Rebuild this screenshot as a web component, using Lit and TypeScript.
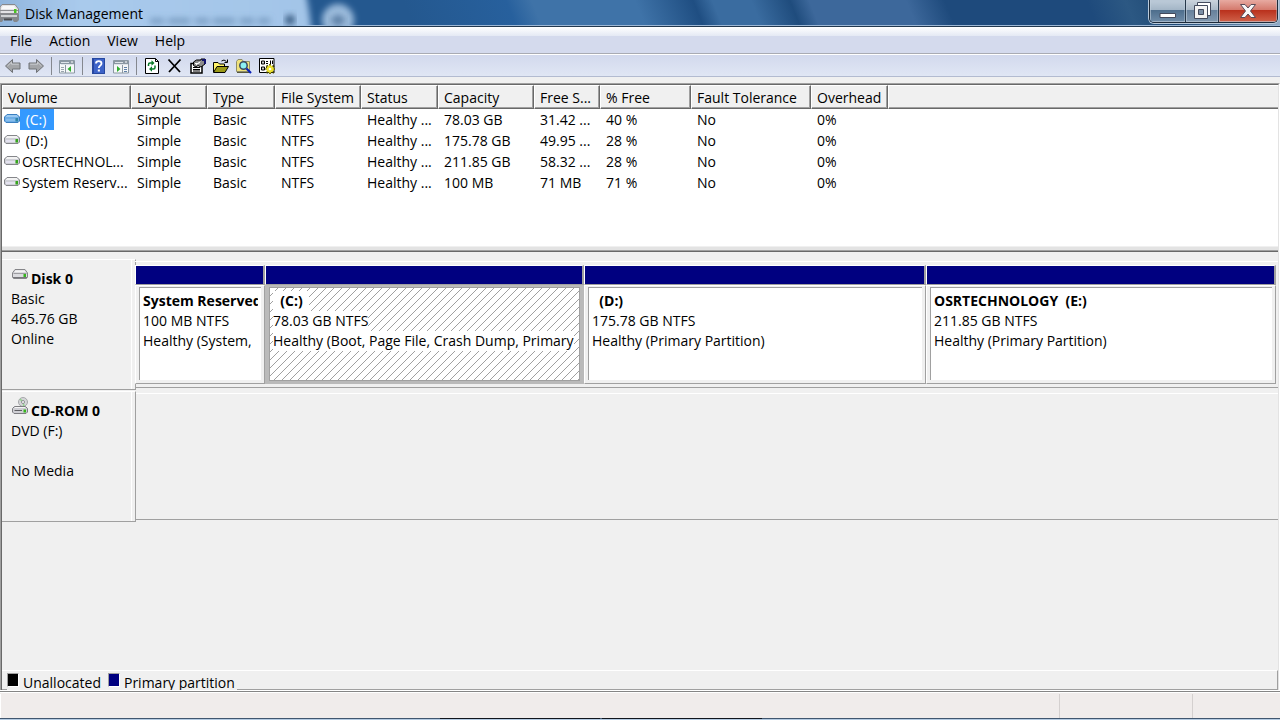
import { LitElement, html, css, svg, nothing } from "lit";
import { customElement, property } from "lit/decorators.js";
import { classMap } from "lit/directives/class-map.js";

interface Volume {
  name: string;
  cells: string[];
  selected?: boolean;
}

interface Partition {
  name: string;
  size: string;
  status: string;
  share: number;
  selected?: boolean;
}

const COLUMNS: [string, number][] = [
  ["Volume", 129],
  ["Layout", 76],
  ["Type", 68],
  ["File System", 86],
  ["Status", 77],
  ["Capacity", 96],
  ["Free S...", 66],
  ["% Free", 91],
  ["Fault Tolerance", 120],
  ["Overhead", 77],
];

const VOLUMES: Volume[] = [
  { name: " (C:)", selected: true, cells: ["Simple", "Basic", "NTFS", "Healthy ...", "78.03 GB", "31.42 ...", "40 %", "No", "0%"] },
  { name: " (D:)", cells: ["Simple", "Basic", "NTFS", "Healthy ...", "175.78 GB", "49.95 ...", "28 %", "No", "0%"] },
  { name: "OSRTECHNOL...", cells: ["Simple", "Basic", "NTFS", "Healthy ...", "211.85 GB", "58.32 ...", "28 %", "No", "0%"] },
  { name: "System Reserv...", cells: ["Simple", "Basic", "NTFS", "Healthy ...", "100 MB", "71 MB", "71 %", "No", "0%"] },
];

const PARTITIONS: Partition[] = [
  { name: "System Reserved", size: "100 MB NTFS", status: "Healthy (System,", share: 130 },
  { name: "  (C:)", size: "78.03 GB NTFS", status: "Healthy (Boot, Page File, Crash Dump, Primary", share: 319, selected: true },
  { name: "  (D:)", size: "175.78 GB NTFS", status: "Healthy (Primary Partition)", share: 342 },
  { name: "OSRTECHNOLOGY  (E:)", size: "211.85 GB NTFS", status: "Healthy (Primary Partition)", share: 350 },
];

const icon = (body: unknown) => html`<svg width="16" height="16" viewBox="0 0 16 16" aria-hidden="true">${body}</svg>`;

const arrow = svg`
  <path d="M.5 8 7.500 1.500V5H15V11H7.500V14.500Z" fill="#a3a5a8" stroke="#6f7276"/>
  <path d="M2.500 8 6.500 4.200V6.200H13.800" fill="none" stroke="#c9cbcf"/>`;

const ICONS = {
  back: icon(arrow),
  forward: icon(svg`<g transform="matrix(-1 0 0 1 16 0)">${arrow}</g>`),
  tree: icon(svg`
    <path d="M.5 2.500H15.500V15H.5Z" fill="#f5f7f8" stroke="#8b98a3"/>
    <path d="M1 3H15V6H1Z" fill="#8b98a3"/><path d="M2 4.500H10M2 6.500H15" stroke="#dde3e8"/><path d="M12 4H14" stroke="#fff"/>
    <path d="M6.500 7V15" stroke="#8b98a3"/><path d="M2 9.500H5M2 11.500H5M2 13.500H5" stroke="#9aa5ae"/>
    <path d="M12 8V14L8.500 11Z" fill="#2fae2f"/>`),
  help: icon(svg`
    <path d="M2 0H15V16H2Z" fill="#3d63c8"/><path d="M2 0H4V16H2Z" fill="#2846a0"/><path d="M2.500 .5H14.500V15.500H2.500Z" fill="none" stroke="#26489f"/>
    <path d="M6 5.500C6 2.300 11.500 2.300 11.500 5.500C11.500 7.500 8.800 7.800 8.800 10" fill="none" stroke="#fff" stroke-width="1.800"/><path d="M7.800 11.500H9.900V13.500H7.800Z" fill="#fff"/>`),
  panel: icon(svg`
    <path d="M.5 2.500H15.500V15H.5Z" fill="#f5f7f8" stroke="#8b98a3"/>
    <path d="M1 3H15V6H1Z" fill="#8b98a3"/><path d="M2 4.500H10M1 6.500H15" stroke="#dde3e8"/><path d="M12 4H14" stroke="#fff"/>
    <path d="M9.500 7V15" stroke="#8b98a3"/><path d="M11 9.500H14M11 11.500H14M11 13.500H14" stroke="#5f80a8"/>
    <path d="M4 8V14L7.500 11Z" fill="#2fae2f"/>`),
  refresh: icon(svg`
    <path d="M1.500 .5H11.500L14.500 3.500V15.500H1.500Z" fill="#fff" stroke="#000"/><path d="M11.500 .5V3.500H14.500" fill="none" stroke="#000"/>
    <path d="M4.500 8V6.500Q4.500 5 6 5H8.500M11 7.500V9.500Q11 11 9.500 11H7" fill="none" stroke="#0a7a2a" stroke-width="1.500"/>
    <path d="M7.500 2.300V7.700L10.500 5ZM8 8.300V13.700L5 11Z" fill="#0a7a2a"/>`),
  remove: icon(svg`<path d="M1.500 1.500 13 14M13.500 1.500 2 14" fill="none" stroke="#000" stroke-width="1.800"/>`),
  properties: icon(svg`
    <path d="M1 5.500H12V15H1Z" fill="#fff" stroke="#000" stroke-width="1.500"/><path d="M3 9.500H10M3 11.500H10M3 13H10" stroke="#000"/>
    <path d="M3.500 7.500V4L6.500 2H11V1H15V6L11 9L8 7.500 6 9Z" fill="#8a8a8a" stroke="#000"/>
    <path d="M5 5.500H8M6 7 9 4.500M10 3.500 8.500 6" stroke="#fff"/><path d="M12 1H16V6H14V3H12Z" fill="#12126b"/>`),
  open: icon(svg`
    <path d="M.5 14V4.500H5L6.500 6H11.500V8" fill="#fff36a" stroke="#000"/>
    <path d="M.5 14.500 4 8.500H15.500L12 14.500Z" fill="#9b9a18" stroke="#000"/>
    <path d="M8.500 3Q11 .8 13.500 3.500M14.500 1.500V4.500H11.500" fill="none" stroke="#000"/>`),
  find: icon(svg`
    <path d="M.5 13.500V3.500L2 1.500H6L7.500 3.500H13.500V13.500Z" fill="#f0e27c" stroke="#8e8d6a"/>
    <path d="M1 14.500H14" stroke="#55553c"/>
    <circle cx="7.500" cy="7.500" r="3.700" fill="#8cf0f4" stroke="#3b4a63" stroke-width="1.500"/><path d="M10.500 10.500 15 15" stroke="#0a20b8" stroke-width="2.200"/>`),
  settings: icon(svg`
    <path d="M.5 .5H15V14.500H.5Z" fill="#fff" stroke="#000"/>
    <path d="M2.500 3H5.500V6H2.500ZM2.500 9H5.500V12H2.500Z" fill="#c8c8c8" stroke="#000"/><path d="M7 3.500H9M7 5.500H9M7 9.500H9M11.500 2.500V6M13.500 2.500V6" stroke="#000"/>
    <path d="M11 6V16M6.500 11H16M7.500 7.500 15 15M15 7.500 7.500 15" stroke="#3c3900" stroke-width="2"/>
    <circle cx="11" cy="11" r="3.600" fill="#ede32e"/><path d="M11 6.500V9M7 11H9M11 13V15.500M13 11H15.500" stroke="#ede32e" stroke-width="1.200"/>
    <circle cx="11" cy="11" r="1.300" fill="#fff"/>`),
};

const driveIcon = (selected = false) => html`<svg width="16" height="9" viewBox="0 0 16 9" aria-hidden="true">
  <path d="M3 .5H13L15.500 3V7L14 8.500H2L.5 7V3Z" fill=${selected ? "#6faee6" : "#cfd0d6"} stroke=${selected ? "#3b7fc0" : "#85868a"}/>
  <path d="M3 1.500H13M2 2.500H14" stroke=${selected ? "#9bcaf2" : "#f3f3f3"}/>
  <path d="M2 6H11" stroke=${selected ? "#86bdec" : "#e4e2f0"} stroke-width="2"/>
  <path d="M11.500 4H14V7.500H11.500Z" fill=${selected ? "#2f86a8" : "#35a51c"}/>
</svg>`;

const diskIcon = html`<svg width="16" height="10" viewBox="0 0 16 10" aria-hidden="true">
  <path d="M3 .5H13L15.500 4V8L14.500 9.500H1.500L.5 8V4Z" fill="#dcdce0" stroke="#858589"/>
  <path d="M3.500 1.500H12.500L13.500 3H2.500Z" fill="#f4f4f4"/><path d="M1.500 4.500H14.500" stroke="#9d9da1"/>
  <path d="M1 8.500H15" stroke="#77777b"/><path d="M11.500 5H14V8H11.500Z" fill="#35b51c"/>
</svg>`;

const cdIcon = html`<svg width="16" height="17" viewBox="0 0 16 17" aria-hidden="true">
  <circle cx="11" cy="5" r="4.500" fill="#d5d6d8" stroke="#a6a7aa"/><path d="M8 2 11 5 12 9.500" stroke="#92d48e" stroke-width="1.500" fill="none"/>
  <circle cx="11" cy="5" r="1.500" fill="#fff" stroke="#8d8e92"/>
  <path d="M2.500 9.500H13.500L15.500 11.500V15L14 16.500H2L.5 15V11.500Z" fill="#cfcfd4" stroke="#7c7c80"/>
  <path d="M3 10.500H13" stroke="#f5f5f5"/><path d="M2.500 13.500H10" stroke="#5e5e62"/><path d="M11.500 12.500H14V15.500H11.500Z" fill="#35b51c"/>
</svg>`;

const shared = css`
  * { box-sizing: border-box; }
  svg { display: block; flex: none; }
`;

@customElement("dm-titlebar")
class TitleBar extends LitElement {
  static styles = [shared, css`
    :host {
      display: flex; align-items: center; height: 27px; position: relative; overflow: hidden;
      border-bottom: 1px solid #22384f;
      box-shadow: inset 0 -1px #9db8d6;
      background: linear-gradient(68deg, #24588f 0 32%, #27609d 40%, #3f73a8 42% 50%, #1f4e82 54.5%, #3a6ca0 56% 59%, #1f4c7d 62%, #3d689b 63.5% 71%, #1e4a7c 74% 85%, #2c5883 88%, #1f4a76 91%, #6888a8 97%, #9fb6cd 100%);
    }
    .glass { position: absolute; left: 0; top: 0; }
    .logo { position: relative; }
    h1 { position: relative; margin: 0 auto 0 6px; padding-top: 2px; font-size: 14px; font-weight: 400; line-height: 20px; }
    .controls {
      position: relative; display: flex; align-self: flex-start; height: 23px; margin-right: 2px;
      border: 1px solid #1d2b3a; border-top: 0; border-radius: 0 0 5px 5px; overflow: hidden;
      box-shadow: 0 0 0 1px #b9cadb;
    }
    button {
      display: grid; place-items: center; padding: 0; border: 0; border-right: 1px solid #26384a; width: 36px; height: 22px;
      background: linear-gradient(#b9c8d6 0 2px, #a3b5c6 45%, #4d6d8c 46%, #6f8ca8 100%);
      box-shadow: inset 1px -1px #c3d1de99, inset -1px 0 #c3d1de66;
    }
    .restore { width: 33px; background: linear-gradient(#cbd4dd 0, #a9b8c6 45%, #66809b 46%, #8299b0 100%); }
    .close { width: 58px; border: 0; background: linear-gradient(#e7aaa1 0, #d4796c 45%, #b9301c 46%, #d0624a 100%); }
  `];

  render() {
    return html`
      <svg class="glass" width="380" height="26" viewBox="0 0 380 26" aria-hidden="true">
        <defs>
          <filter id="soft" x="-20%" y="-60%" width="140%" height="220%"><feGaussianBlur stdDeviation="3"/></filter>
          <linearGradient id="tab"><stop offset="0" stop-color="#8bb0d9"/><stop offset=".3" stop-color="#a9caec"/><stop offset="1" stop-color="#a3c5e8"/></linearGradient>
        </defs>
        <path d="M-20-20H302Q310 5 312 40H-20Z" fill="url(#tab)" filter="url(#soft)"/>
        <g filter="url(#soft)"><path d="M120 0H280V36H120Z" fill="none"/><path d="M150 21H270" stroke="#5f83ac" stroke-width="5" stroke-dasharray="14 4 22 5" opacity=".7"/></g>
        <circle cx="290" cy="20" r="5" fill="#36587f" filter="url(#soft)"/>
        <circle cx="338" cy="20" r="16" fill="#9bbbdc" filter="url(#soft)"/>
        <path d="M331 20H345M338 15V26" stroke="#4f7299" stroke-width="4" filter="url(#soft)"/>
      </svg>
      <svg class="logo" width="19" height="20" viewBox="0 0 19 20" aria-hidden="true">
        <path d="M2 1.500H15L18.500 6V10.500H0V4Z" fill="#e3e3e5" stroke="#88898c"/><path d="M3 3H14L16 6H1Z" fill="#f8f8f8"/>
        <path d="M0 7.500H18" stroke="#8c8d90"/><path d="M14 6H16.500V10H14Z" fill="#49c422"/>
        <path d="M0 11H19V17L17 19H14L12 16H4L2 19H0Z" fill="#85888c"/><path d="M1 13H17" stroke="#d0d2d4" stroke-width="2"/><path d="M4 16.500H12" stroke="#4b4d50" stroke-width="2"/>
      </svg>
      <h1>Disk Management</h1>
      <div class="controls">
        <button aria-label="Minimize"><svg width="18" height="22" viewBox="0 0 18 22"><path d="M1 13.500H16.500V17.500H1Z" fill="#fff" stroke="#434a5c"/></svg></button>
        <button class="restore" aria-label="Restore"><svg width="20" height="20" viewBox="0 0 20 20">
          <path d="M5.500 1.500H18.500V14.500H5.500Z" fill="#fff" stroke="#434a5c"/>
          <path d="M2.500 4.500H15.500V17.500H2.500Z" fill="#f3f3f3" stroke="#434a5c"/><path d="M6.500 8.500H11.500V13.500H6.500Z" fill="#7b8ea5" stroke="#434a5c"/></svg></button>
        <button class="close" aria-label="Close"><svg width="18" height="16" viewBox="0 0 18 16">
          <path d="M1.500 1.500H6L9 5 12 1.500H16.500L11.500 8 16.500 14.500H12L9 11 6 14.500H1.500L6.500 8Z" fill="#f8f8f8" stroke="#584a57"/></svg></button>
      </div>`;
  }
}

@customElement("dm-toolbar")
class ToolBar extends LitElement {
  static styles = [shared, css`
    :host { display: block; }
    nav { display: flex; align-items: center; gap: 17px; height: 26px; padding: 2px 10px 0; background: linear-gradient(#fff, #e4e9f4 9px, #d4daed 9px); }
    nav button { padding: 0; border: 0; background: none; font: inherit; color: inherit; line-height: 20px; }
    .tools { display: flex; align-items: center; gap: 7px; height: 24px; padding: 2px 0 0 5px; border-top: 1px solid #a9abb3; border-bottom: 1px solid #b3bbd0; background: linear-gradient(#fff 0 1px, #d2d9ed 1px, #e0e6f4); }
    .tools button { padding: 0; border: 0; background: none; }
    .sep { width: 1px; height: 18px; background: #85888f; }
  `];

  render() {
    const tool = (label: string, glyph: unknown) => html`<button aria-label=${label}>${glyph}</button>`;
    const sep = html`<span class="sep"></span>`;
    return html`
      <nav>${["File", "Action", "View", "Help"].map((m) => html`<button>${m}</button>`)}</nav>
      <div class="tools">
        ${tool("Back", ICONS.back)}${tool("Forward", ICONS.forward)}${sep}
        ${tool("Console tree", ICONS.tree)}${sep}
        ${tool("Help", ICONS.help)}${tool("Action pane", ICONS.panel)}${sep}
        ${tool("Refresh", ICONS.refresh)}${tool("Delete", ICONS.remove)}${tool("Properties", ICONS.properties)}
        ${tool("Open", ICONS.open)}${tool("Explore", ICONS.find)}${tool("Settings", ICONS.settings)}
      </div>`;
  }
}

@customElement("dm-volume-list")
class VolumeList extends LitElement {
  static styles = [shared, css`
    :host { display: block; height: 160px; background: #fff; overflow: hidden; }
    table { width: 100%; border-collapse: separate; border-spacing: 0; table-layout: fixed; }
    th, td { padding: 0 0 0 6px; text-align: left; font-weight: 400; white-space: pre; overflow: hidden; line-height: 20px; }
    th {
      height: 24px; padding: 1px 0 0 5px; background: #f0f0f0;
      border: 1px solid #696969; border-top-color: #fff; border-left-color: #fff;
      box-shadow: inset -1px -1px #a0a0a0;
    }
    th:last-child { border-right: 0; box-shadow: inset 0 -1px #a0a0a0; }
    td { height: 21px; padding-top: 1px; }
    td:first-child { padding: 0 0 0 2px; }
    .name { display: flex; align-items: flex-start; height: 21px; }
    .name svg { margin-top: 5px; }
    .label { padding: 1px 2px 0; height: 21px; }
    .selected .label { background: #39f; color: #fff; padding-right: 8px; }
  `];

  render() {
    return html`<table>
      <colgroup>${COLUMNS.map(([, w]) => html`<col style="width:${w}px">`)}<col></colgroup>
      <thead><tr>${COLUMNS.map(([name]) => html`<th>${name}</th>`)}<th></th></tr></thead>
      <tbody>${VOLUMES.map((v) => html`<tr class=${classMap({ selected: !!v.selected })}>
        <td><div class="name">${driveIcon(v.selected)}<span class="label">${v.name}</span></div></td>
        ${v.cells.map((c) => html`<td>${c}</td>`)}<td></td>
      </tr>`)}</tbody>
    </table>`;
  }
}

@customElement("dm-partition")
class PartitionBox extends LitElement {
  @property({ attribute: false }) data!: Partition;

  static styles = [shared, css`
    :host { display: flex; flex-direction: column; min-width: 0; }
    .bar { height: 20px; background: #000080; border: 1px solid #fff; border-right: 2px solid #a0a0a0; border-bottom-color: #a0a0a0; }
    .body { flex: 1; display: flex; padding: 1px 3px 3px; border: 1px solid #fff; border-right-color: #a0a0a0; border-bottom-color: #a0a0a0; background: #f0f0f0; }
    .inner { position: relative; flex: 1; min-width: 0; padding: 3px; background: #fff; border: solid #a0a0a0; border-width: 1px 0 0 1px; }
    .selected { background: #bababa; border-color: #bababa; padding-bottom: 2px; }
    .selected .inner { border-width: 1px; padding-right: 0; }
    .hatch { position: absolute; inset: 0; width: 100%; height: 100%; }
    .line { position: relative; height: 20px; line-height: 20px; white-space: pre; overflow: hidden; }
    .line span { display: inline-block; height: 20px; background: #fff; }
    .title { font-weight: 700; }
    .selected .title span { padding-right: 6px; }
  `];

  render() {
    const { name, size, status, selected } = this.data;
    return html`
      <div class="bar"></div>
      <div class=${classMap({ body: true, selected: !!selected })}>
        <div class="inner">
          ${selected
            ? html`<svg class="hatch" aria-hidden="true"><defs><pattern id="h" width="8" height="8" patternUnits="userSpaceOnUse">
                ${[0, 1, 2, 3, 4, 5, 6, 7].map((i) => svg`<rect x=${i} y=${7 - i} width="1" height="1" fill="#a0a0a0"/>`)}
              </pattern></defs><rect width="100%" height="100%" fill="url(#h)"/></svg>`
            : nothing}
          <div class="line title"><span>${name}</span></div>
          <div class="line"><span>${size}</span></div>
          <div class="line"><span>${status}</span></div>
        </div>
      </div>`;
  }
}

@customElement("dm-disk-map")
class DiskMap extends LitElement {
  static styles = [shared, css`
    :host { display: flex; flex-direction: column; gap: 1px; padding-top: 7px; background: #f0f0f0; }
    .row { display: grid; grid-template-columns: 134px minmax(0, 1fr); min-height: 131px; }
    .disk {
      padding: 9px 0 0 9px; border: solid #a0a0a0; border-width: 1px 1px 1px 0; border-top-color: #fff;
      background: linear-gradient(#fff, #fff) 129px 0 / 1px 100% no-repeat; line-height: 20px;
    }
    .disk p { margin: 0; min-height: 20px; }
    .disk .head { display: flex; gap: 3px; padding-left: 1px; font-weight: 700; }
    .cdrom .head svg { margin-top: -4px; }
    .parts { display: flex; margin: 2px 0; padding: 3px 2px 3px 0; border-top: 1px solid #fff; border-bottom: 1px solid #a0a0a0; }
    .disk0 { margin-left: -1px; }
  `];

  render() {
    return html`
      <section class="row">
        <div class="disk"><p class="head">${diskIcon}Disk 0</p><p>Basic</p><p>465.76 GB</p><p>Online</p></div>
        <div class="parts disk0">${PARTITIONS.map((p) => html`<dm-partition .data=${p} style="flex:${p.share} 1 0"></dm-partition>`)}</div>
      </section>
      <section class="row cdrom">
        <div class="disk"><p class="head">${cdIcon}CD-ROM 0</p><p>DVD (F:)</p><p></p><p>No Media</p></div>
        <div class="parts"></div>
      </section>`;
  }
}

@customElement("app-root")
class AppRoot extends LitElement {
  static styles = [shared, css`
    :host {
      display: flex; flex-direction: column; min-height: 100vh; color: #000; background: #f0f0f0;
      font: 14px/20px "Open Sans", "Noto Sans", sans-serif;
    }
    .work {
      flex: 1; display: flex; flex-direction: column; margin-top: 6px;
      border: solid #a0a0a0; border-width: 1px 0 0 1px; border-right: 1px solid #fff;
    }
    .pane { flex: 1; display: flex; flex-direction: column; border: solid #696969; border-width: 1px 0 0 1px; border-right: 1px solid #e3e3e3; }
    .splitter { height: 7px; border-top: 1px solid #fff; border-bottom: 1px solid #696969; box-shadow: inset 0 -1px #a0a0a0; background: linear-gradient(#f0f0f0 0 1px, #e3e3e3 1px); }
    dm-disk-map { flex: 1; }
    .legend { display: flex; height: 20px; padding: 2px 0 0 5px; border: solid #a0a0a0; border-width: 1px 1px 1px 0; border-top-color: #fff; }
    .key { display: flex; gap: 4px; height: 18px; padding-right: 7px; background: #f0f0f0; }
    .key:last-child { padding-right: 2px; }
    .swatch { width: 12px; height: 14px; background: #000; border: 1px solid #a0a0a0; border-right-color: #fff; border-bottom-color: #fff; }
    .primary { background: #000080; }
    .status { display: grid; grid-template-columns: 1fr 133px 88px; height: 28px; border-top: 1px solid #fff; background: #f0eceb; box-shadow: inset 0 1px #858585, inset 0 2px #fff; }
    .status span { margin-top: 3px; border-left: 1px solid #d4d0cf; }
    .status span:first-child { border-left-color: #fff; }
    .edge { height: 2px; background: linear-gradient(#41566f 0 1px, #b4cbe2 1px); padding-left: 34.4%; display: flex; gap: 2px; }
    .edge i { width: 160px; height: 1px; background: #10151d; }
  `];

  render() {
    return html`
      <dm-titlebar></dm-titlebar>
      <dm-toolbar></dm-toolbar>
      <main class="work"><div class="pane">
        <dm-volume-list></dm-volume-list>
        <div class="splitter"></div>
        <dm-disk-map></dm-disk-map>
        <div class="legend">
          <span class="key"><span class="swatch"></span>Unallocated</span>
          <span class="key"><span class="swatch primary"></span>Primary partition</span>
        </div>
      </div></main>
      <footer class="status"><span></span><span></span><span></span></footer>
      <div class="edge"><i></i><i></i></div>`;
  }
}
